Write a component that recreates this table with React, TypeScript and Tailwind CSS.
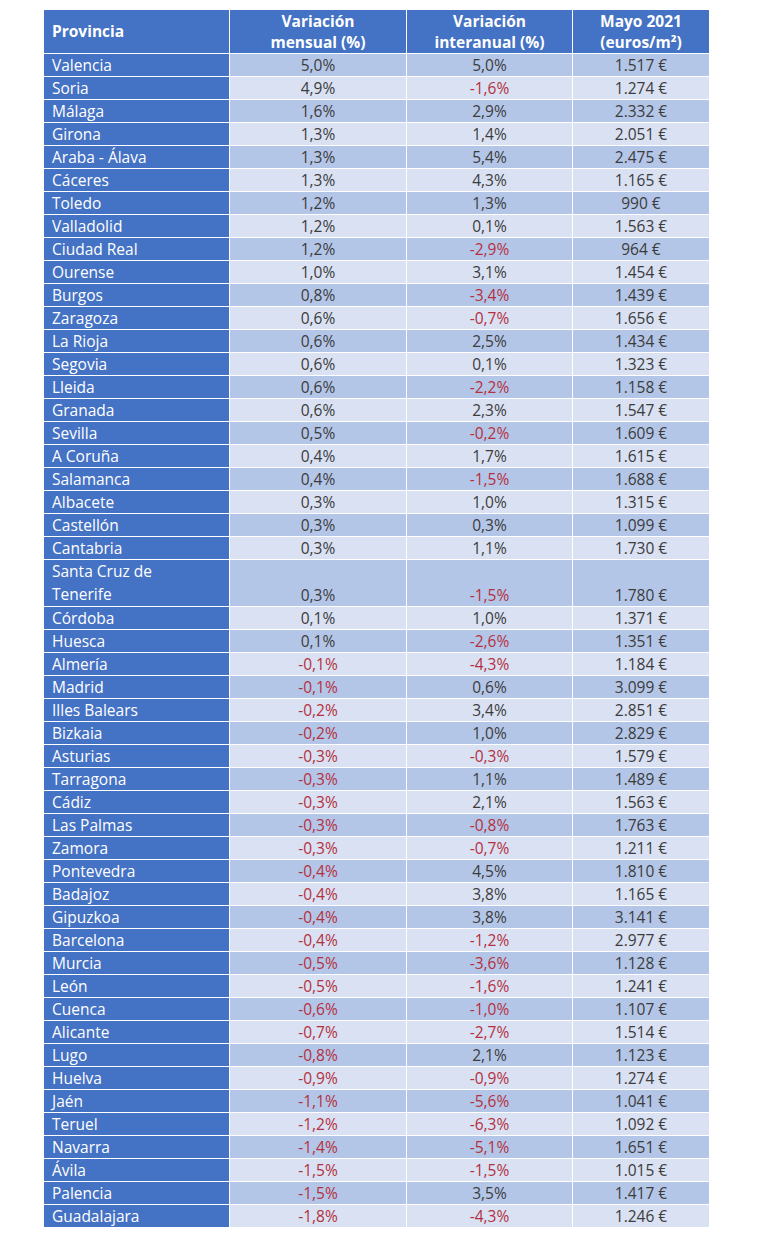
const rows: [string, string, string, string][] = [
  ["Valencia", "5,0%", "5,0%", "1.517 €"],
  ["Soria", "4,9%", "-1,6%", "1.274 €"],
  ["Málaga", "1,6%", "2,9%", "2.332 €"],
  ["Girona", "1,3%", "1,4%", "2.051 €"],
  ["Araba - Álava", "1,3%", "5,4%", "2.475 €"],
  ["Cáceres", "1,3%", "4,3%", "1.165 €"],
  ["Toledo", "1,2%", "1,3%", "990 €"],
  ["Valladolid", "1,2%", "0,1%", "1.563 €"],
  ["Ciudad Real", "1,2%", "-2,9%", "964 €"],
  ["Ourense", "1,0%", "3,1%", "1.454 €"],
  ["Burgos", "0,8%", "-3,4%", "1.439 €"],
  ["Zaragoza", "0,6%", "-0,7%", "1.656 €"],
  ["La Rioja", "0,6%", "2,5%", "1.434 €"],
  ["Segovia", "0,6%", "0,1%", "1.323 €"],
  ["Lleida", "0,6%", "-2,2%", "1.158 €"],
  ["Granada", "0,6%", "2,3%", "1.547 €"],
  ["Sevilla", "0,5%", "-0,2%", "1.609 €"],
  ["A Coruña", "0,4%", "1,7%", "1.615 €"],
  ["Salamanca", "0,4%", "-1,5%", "1.688 €"],
  ["Albacete", "0,3%", "1,0%", "1.315 €"],
  ["Castellón", "0,3%", "0,3%", "1.099 €"],
  ["Cantabria", "0,3%", "1,1%", "1.730 €"],
  ["Santa Cruz de|Tenerife", "0,3%", "-1,5%", "1.780 €"],
  ["Córdoba", "0,1%", "1,0%", "1.371 €"],
  ["Huesca", "0,1%", "-2,6%", "1.351 €"],
  ["Almería", "-0,1%", "-4,3%", "1.184 €"],
  ["Madrid", "-0,1%", "0,6%", "3.099 €"],
  ["Illes Balears", "-0,2%", "3,4%", "2.851 €"],
  ["Bizkaia", "-0,2%", "1,0%", "2.829 €"],
  ["Asturias", "-0,3%", "-0,3%", "1.579 €"],
  ["Tarragona", "-0,3%", "1,1%", "1.489 €"],
  ["Cádiz", "-0,3%", "2,1%", "1.563 €"],
  ["Las Palmas", "-0,3%", "-0,8%", "1.763 €"],
  ["Zamora", "-0,3%", "-0,7%", "1.211 €"],
  ["Pontevedra", "-0,4%", "4,5%", "1.810 €"],
  ["Badajoz", "-0,4%", "3,8%", "1.165 €"],
  ["Gipuzkoa", "-0,4%", "3,8%", "3.141 €"],
  ["Barcelona", "-0,4%", "-1,2%", "2.977 €"],
  ["Murcia", "-0,5%", "-3,6%", "1.128 €"],
  ["León", "-0,5%", "-1,6%", "1.241 €"],
  ["Cuenca", "-0,6%", "-1,0%", "1.107 €"],
  ["Alicante", "-0,7%", "-2,7%", "1.514 €"],
  ["Lugo", "-0,8%", "2,1%", "1.123 €"],
  ["Huelva", "-0,9%", "-0,9%", "1.274 €"],
  ["Jaén", "-1,1%", "-5,6%", "1.041 €"],
  ["Teruel", "-1,2%", "-6,3%", "1.092 €"],
  ["Navarra", "-1,4%", "-5,1%", "1.651 €"],
  ["Ávila", "-1,5%", "-1,5%", "1.015 €"],
  ["Palencia", "-1,5%", "3,5%", "1.417 €"],
  ["Guadalajara", "-1,8%", "-4,3%", "1.246 €"],
];

const Pct = ({ v }: { v: string }) => (
  <span className={v.startsWith("-") ? "text-[#b5303f]" : "text-[#3c3c3c]"}>{v}</span>
);

export default function App() {
  return (
    <div className="min-h-[1238px] bg-white pt-[9px] pl-[43px] font-['Open_Sans',sans-serif] text-[15.5px]">
      <table className="border-collapse">
        <thead>
          <tr className="bg-[#4472c4] text-white font-bold leading-[21px]">
            <th className="w-[186px] h-[44px] border border-white pl-2 text-left align-middle">Provincia</th>
            <th className="w-[177px] border border-white text-center">
              Variación
              <br />
              mensual (%)
            </th>
            <th className="w-[166px] border border-white text-center">
              Variación
              <br />
              interanual (%)
            </th>
            <th className="w-[137px] border border-white text-center">
              Mayo 2021
              <br />
              (euros/m²)
            </th>
          </tr>
        </thead>
        <tbody>
          {rows.map(([name, m, i, p], idx) => {
            const stripe = idx % 2 === 0 ? "bg-[#b4c6e7]" : "bg-[#d9e1f2]";
            const lines = name.split("|");
            return (
              <tr key={name} className="leading-[22px]">
                <td className="h-[23px] border border-white bg-[#4472c4] pl-2 text-white align-bottom">
                  {lines.map((l, k) => (
                    <div key={k} className={lines.length > 1 ? "leading-[23px]" : ""}>
                      {l}
                    </div>
                  ))}
                </td>
                <td className={`border border-white ${stripe} text-center align-bottom`}>
                  <Pct v={m} />
                </td>
                <td className={`border border-white ${stripe} text-center align-bottom`}>
                  <Pct v={i} />
                </td>
                <td className={`border border-white ${stripe} text-center align-bottom text-[#3c3c3c]`}>{p}</td>
              </tr>
            );
          })}
        </tbody>
      </table>
    </div>
  );
}
